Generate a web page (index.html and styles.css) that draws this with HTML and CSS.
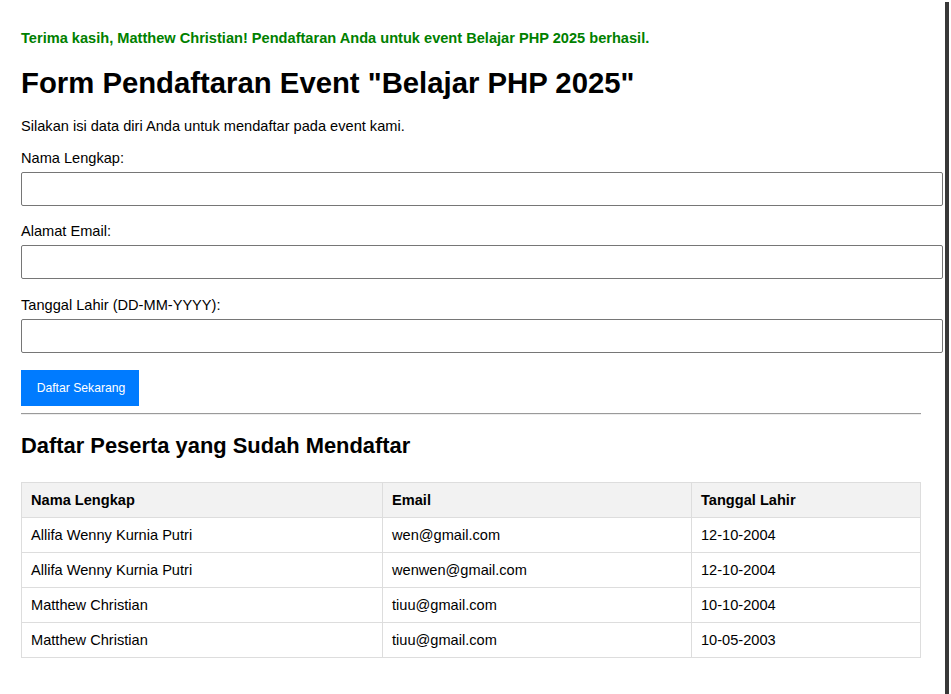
FILE: index.html
```html
<!DOCTYPE html>
<html lang="id">
<head>
<meta charset="utf-8">
<title>Form Pendaftaran Event</title>
<link rel="stylesheet" href="styles.css">
</head>
<body>
<div class="page">
  <p class="success">Terima kasih, Matthew Christian! Pendaftaran Anda untuk event Belajar PHP 2025 berhasil.</p>
  <h1 class="title">Form Pendaftaran Event "Belajar PHP 2025"</h1>
  <p class="intro">Silakan isi data diri Anda untuk mendaftar pada event kami.</p>
  <form class="form">
    <div class="group">
      <label class="label" for="nama">Nama Lengkap:</label>
      <input class="field" type="text" id="nama">
    </div>
    <div class="group">
      <label class="label" for="email">Alamat Email:</label>
      <input class="field" type="text" id="email">
    </div>
    <div class="group">
      <label class="label" for="tgl">Tanggal Lahir (DD-MM-YYYY):</label>
      <input class="field" type="text" id="tgl">
    </div>
    <button class="btn" type="button">Daftar Sekarang</button>
  </form>
  <hr class="divider">
  <h2 class="subtitle">Daftar Peserta yang Sudah Mendaftar</h2>
  <table class="table">
    <colgroup>
      <col class="c1"><col class="c2"><col class="c3">
    </colgroup>
    <thead>
      <tr><th>Nama Lengkap</th><th>Email</th><th>Tanggal Lahir</th></tr>
    </thead>
    <tbody>
      <tr><td>Allifa Wenny Kurnia Putri</td><td>wen@gmail.com</td><td>12-10-2004</td></tr>
      <tr><td>Allifa Wenny Kurnia Putri</td><td>wenwen@gmail.com</td><td>12-10-2004</td></tr>
      <tr><td>Matthew Christian</td><td>tiuu@gmail.com</td><td>10-10-2004</td></tr>
      <tr><td>Matthew Christian</td><td>tiuu@gmail.com</td><td>10-05-2003</td></tr>
    </tbody>
  </table>
</div>
<div class="edge"></div>
</body>
</html>
```
FILE: styles.css
```css
html, body {
  margin: 0;
  padding: 0;
  background: #ffffff;
}
body {
  font-family: "Liberation Sans", Arial, sans-serif;
  font-size: 14.6px;
  color: #000;
}
.page {
  width: 900px;
  padding: 30px 0 0 21px;
}
.success {
  margin: 0;
  color: #008000;
  font-weight: bold;
  line-height: 17px;
}
.title {
  margin: 19px 0 19px;
  font-size: 29.3px;
  line-height: 33px;
  font-weight: bold;
}
.intro {
  margin: 0 0 15px;
  line-height: 17px;
}
.form {
  margin: 0;
}
.group {
  margin-bottom: 17.3px;
}
.label {
  display: block;
  line-height: 17px;
  margin-bottom: 5px;
}
.field {
  display: block;
  box-sizing: border-box;
  width: 922px;
  height: 34px;
  margin: 0;
  padding: 0 10px;
  border: 1px solid #767676;
  border-radius: 2px;
  font: inherit;
  background: #fff;
}
.btn {
  display: block;
  box-sizing: border-box;
  width: 118px;
  height: 36px;
  margin: 0;
  padding: 0 0 0 2px;
  border: none;
  background: #007bff;
  color: #fff;
  font-family: "Liberation Sans", Arial, sans-serif;
  font-size: 12.2px;
}
.divider {
  margin: 7px 0 0;
  height: 0;
  border: none;
  border-top: 1px solid #9a9a9a;
  border-bottom: 1px solid #eeeeee;
}
.subtitle {
  margin: 18.5px 0 24px;
  font-size: 21.9px;
  line-height: 25px;
  font-weight: bold;
}
.table {
  width: 899px;
  border-collapse: collapse;
  table-layout: fixed;
}
.c1 { width: 361px; }
.c2 { width: 309px; }
.c3 { width: 229px; }
.table th,
.table td {
  border: 1px solid #dddddd;
  padding: 9px;
  line-height: 16px;
  text-align: left;
}
.table th {
  background: #f2f2f2;
  font-weight: bold;
}
.edge {
  position: fixed;
  top: 2px;
  bottom: 0;
  left: 945px;
  width: 4px;
  background: #383838;
}
```
